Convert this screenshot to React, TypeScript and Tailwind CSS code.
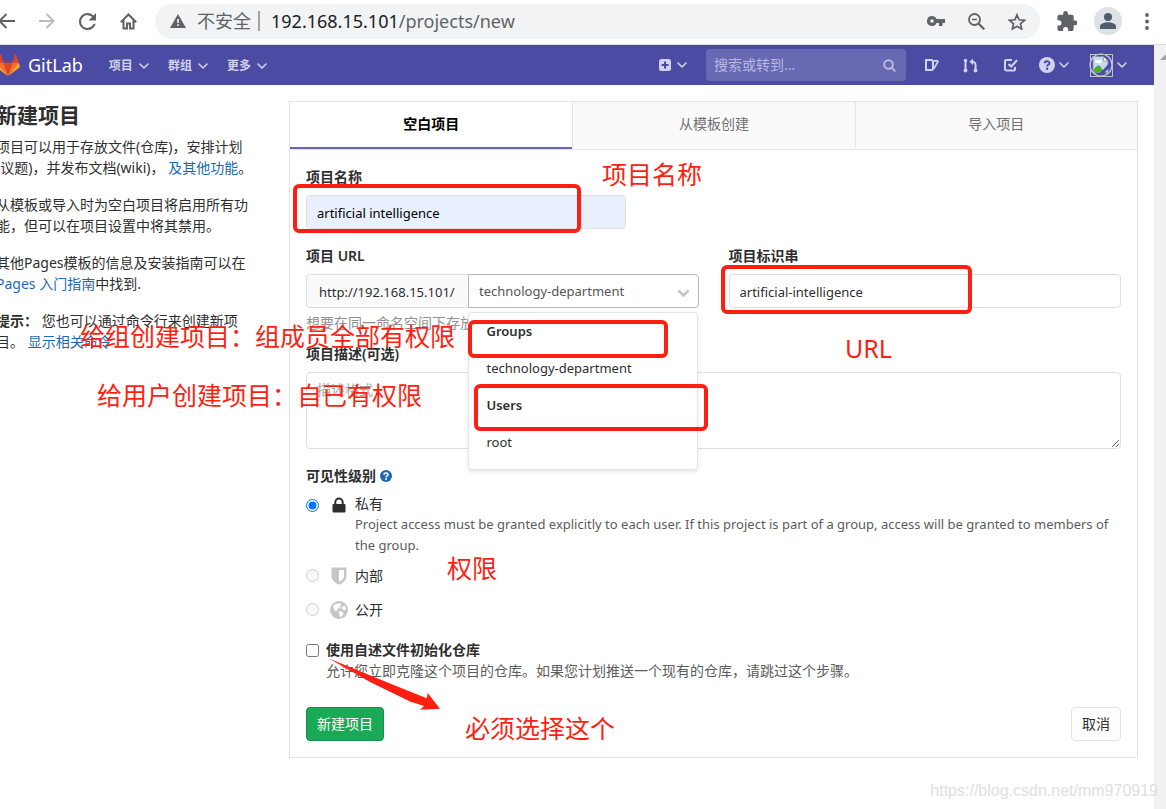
import { useState } from "react";

const FONT = 'font-["Noto_Sans","Noto_Sans_CJK_SC",sans-serif]';

const NAV_LIST = ["项目", "群组", "更多"];
const TAB_LIST = ["空白项目", "从模板创建", "导入项目"];

const NAMESPACE_LIST = [
  { group: "Groups", items: ["technology-department"] },
  { group: "Users", items: ["root"] },
];

const NOTE_LIST = [
  { text: "项目名称", className: "left-[602px] top-[156px]" },
  { text: "URL", className: "left-[845px] top-[330px]" },
  { text: "给组创建项目：组成员全部有权限", className: "left-[80px] top-[318px]" },
  { text: "给用户创建项目：自已有权限", className: "left-[97px] top-[377px]" },
  { text: "权限", className: "left-[447px] top-[550px]" },
  { text: "必须选择这个", className: "left-[465px] top-[710px]" },
];

const BOX_LIST = [
  "left-[293px] top-[184px] w-[288px] h-[49px]",
  "left-[468px] top-[320px] w-[200px] h-[38px]",
  "left-[474px] top-[384px] w-[234px] h-[47px]",
  "left-[721px] top-[265px] w-[251px] h-[49px]",
];

const Chevron = () => (
  <svg width="10" height="6" viewBox="0 0 10 6" fill="none" stroke="currentColor" strokeWidth="1.6" aria-hidden="true">
    <path d="M1 1l4 4 4-4" strokeLinecap="round" strokeLinejoin="round" />
  </svg>
);

const BrowserBar = () => {
  return (
    <div className="flex h-[45px] items-center border-b border-[#d9dbde] bg-white pb-0.5 text-[#5f6368]">
      <div className="flex items-center gap-6 pr-[18px]">
        <button type="button" aria-label="back" className="-ml-0.5">
          <svg width="17" height="16" viewBox="0 0 17 16" fill="none" stroke="#5f6368" strokeWidth="2">
            <path d="M17 8H2M8.500 1L1.500 8l7 7" />
          </svg>
        </button>
        <button type="button" aria-label="forward">
          <svg width="16" height="16" viewBox="0 0 16 16" fill="none" stroke="#babcbe" strokeWidth="2">
            <path d="M0 8h15M7.500 1l7 7-7 7" />
          </svg>
        </button>
        <button type="button" aria-label="reload">
          <svg width="17" height="17" viewBox="4 4 16 16" fill="#5f6368">
            <path d="M17.650 6.350A7.960 7.960 0 0 0 12 4a8 8 0 1 0 7.730 10h-2.080A6 6 0 1 1 12 6c1.660 0 3.140.69 4.220 1.780L13 11h7V4z" />
          </svg>
        </button>
        <button type="button" aria-label="home">
          <svg width="17" height="17" viewBox="0 0 17 17" fill="none" stroke="#5f6368" strokeWidth="2">
            <path d="M.8 9.200L8.500 1.500l7.700 7.700M3.500 7.500v8h3.500v-5h3v5h3.500v-8" />
          </svg>
        </button>
      </div>
      <div className="flex h-[35px] flex-1 items-center rounded-full bg-[#f1f3f4] pl-[15px] pr-3.5">
        <svg width="16" height="14" viewBox="0 0 16 14" aria-hidden="true">
          <path d="M8 0l8 14H0z" fill="#5f6368" />
          <path d="M7.200 5h1.700v4H7.200zM7.200 10.300h1.700V12H7.200z" fill="#f1f3f4" />
        </svg>
        <span className="ml-[11px] text-lg leading-6">不安全</span>
        <span className="ml-[7px] h-5 w-0.5 bg-[#a0a3a7]" />
        <span className="ml-[11px] text-lg leading-6 text-[#202124]">
          192.168.15.101<span className="text-[#5f6368]">/projects/new</span>
        </span>
        <div className="ml-auto flex items-center gap-[23px]">
          <svg width="18" height="10" viewBox="0 0 18 10" aria-hidden="true">
            <path
              d="M5 0a5 5 0 1 0 4.600 7H12v3h3.500V7H18V3H9.600A5 5 0 0 0 5 0zm0 3.200a1.800 1.800 0 1 1 0 3.600 1.800 1.800 0 0 1 0-3.600z"
              fill="#5f6368"
            />
          </svg>
          <svg width="17" height="17" viewBox="0 0 17 17" fill="none" stroke="#5f6368" strokeWidth="1.800" aria-hidden="true">
            <circle cx="6.500" cy="6.500" r="5.500" />
            <path d="M10.700 10.700l5.600 5.600" strokeWidth="2.200" />
            <path d="M4 6.500h5" strokeWidth="1.500" />
          </svg>
          <svg width="18" height="17" viewBox="0 0 18 17" fill="none" stroke="#5f6368" strokeWidth="1.700" aria-hidden="true">
            <path d="M9 1.800l2.100 5 5.400.5-4.100 3.500 1.300 5.200L9 13.200 4.300 16l1.300-5.200-4.100-3.500 5.400-.5z" />
          </svg>
        </div>
      </div>
      <div className="flex items-center pl-[17px] pr-[17px]">
        <svg width="20" height="20" viewBox="2 1 20 21" fill="#5f6368" aria-hidden="true">
          <path d="M20.500 11H19V7a2 2 0 0 0-2-2h-4V3.500a2.500 2.500 0 0 0-5 0V5H4a2 2 0 0 0-2 2v3.800h1.500a2.700 2.700 0 0 1 0 5.400H2V20c0 1.100.9 2 2 2h3.800v-1.500a2.700 2.700 0 0 1 5.400 0V22H17a2 2 0 0 0 2-2v-4h1.500a2.500 2.500 0 0 0 0-5z" />
        </svg>
        <svg className="ml-[17px]" width="28" height="28" viewBox="0 0 28 28" aria-hidden="true">
          <circle cx="14" cy="14" r="14" fill="#dee1e6" />
          <circle cx="14" cy="10" r="4" fill="#4f5b6e" />
          <path d="M6 22v-2.500c0-3 5-4.300 8-4.300s8 1.300 8 4.300V22z" fill="#4f5b6e" />
        </svg>
        <svg className="ml-[23px]" width="4" height="17" viewBox="0 0 4 17" fill="#5f6368" aria-hidden="true">
          <circle cx="2" cy="2" r="1.900" />
          <circle cx="2" cy="8.500" r="1.900" />
          <circle cx="2" cy="15" r="1.900" />
        </svg>
      </div>
    </div>
  );
};

const Navbar = () => {
  return (
    <nav className="flex h-10 items-center bg-[#4b4ba3] text-[#d1d1f0]">
      <a href="#" className="flex items-center text-white">
        <svg className="-ml-1" width="24" height="22" viewBox="0 0 24 22" aria-hidden="true">
          <path d="M12 22l4.400-13.600H7.600z" fill="#e24329" />
          <path d="M12 22L7.600 8.400H1.400z" fill="#fc6d26" />
          <path d="M1.400 8.400L.1 12.500a.9.9 0 0 0 .3 1L12 22z" fill="#fca326" />
          <path d="M1.400 8.400h6.200L5 .3a.5.5 0 0 0-.9 0z" fill="#e24329" />
          <path d="M12 22l4.400-13.600h6.200z" fill="#fc6d26" />
          <path d="M22.600 8.400l1.300 4.100a.9.900 0 0 1-.3 1L12 22z" fill="#fca326" />
          <path d="M22.600 8.400h-6.200L19 .3a.5.500 0 0 1 .9 0z" fill="#e24329" />
        </svg>
        <span className="ml-2 text-lg leading-6">GitLab</span>
      </a>
      <ul className="ml-[26px] flex items-center gap-[19px]">
        {NAV_LIST.map((nav) => (
          <li key={nav}>
            <button type="button" className="flex items-center gap-1.5 pt-px text-xs font-bold leading-5">
              {nav}
              <Chevron />
            </button>
          </li>
        ))}
      </ul>

      <div className="ml-auto flex items-center">
        <button type="button" aria-label="新建" className="flex items-center gap-1.5">
          <svg width="12" height="12" viewBox="0 0 12 12" aria-hidden="true">
            <rect width="12" height="12" rx="2.500" fill="#d1d1f0" />
            <path d="M6 2.500v7M2.500 6h7" stroke="#4b4ba3" strokeWidth="2" />
          </svg>
          <Chevron />
        </button>
        <label className="ml-[19px] flex h-8 w-[200px] items-center rounded bg-[#6868b3] px-2">
          <input
            type="text"
            aria-label="搜索"
            placeholder="搜索或转到..."
            className="w-full min-w-0 bg-transparent text-sm outline-none placeholder:text-[#b9b9e2]"
          />
          <svg className="mr-0.5 shrink-0" width="13" height="13" viewBox="0 0 13 13" fill="none" stroke="#b9b9e2" strokeWidth="2" aria-hidden="true">
            <circle cx="5.500" cy="5.500" r="4.300" />
            <path d="M8.700 8.700l3 3" strokeLinecap="round" />
          </svg>
        </label>
        <a href="#" aria-label="议题" className="ml-[19px]">
          <svg width="14" height="14" viewBox="0 0 14 14" fill="none" stroke="currentColor" strokeWidth="2">
            <path d="M1 2h5.500A1.500 1.500 0 0 1 8 3.500v7A1.500 1.500 0 0 1 6.500 12H1z" />
            <path d="M9 2.800h3.200c.6 0 .8.500.6 1L9 10.500" strokeWidth="1.700" />
          </svg>
        </a>
        <a href="#" aria-label="合并请求" className="ml-6">
          <svg width="15" height="15" viewBox="0 0 15 15" fill="none" stroke="currentColor" strokeWidth="2">
            <path d="M2.500 3v9M12.500 12V7c0-2-1-3.200-3.500-3.200" />
            <circle cx="2.500" cy="2.500" r="1.800" fill="currentColor" stroke="none" />
            <circle cx="2.500" cy="12.500" r="1.900" fill="currentColor" stroke="none" />
            <circle cx="12.500" cy="12.500" r="1.900" fill="currentColor" stroke="none" />
            <path d="M10 .5v6.500L6.300 3.800z" fill="currentColor" stroke="none" />
          </svg>
        </a>
        <a href="#" aria-label="待办事项" className="ml-[26px]">
          <svg width="14" height="14" viewBox="0 0 14 14" fill="none" stroke="currentColor" strokeWidth="2">
            <path d="M8 2H2.200A1.200 1.200 0 0 0 1 3.200v8.100a1.200 1.200 0 0 0 1.200 1.200h7.600a1.200 1.200 0 0 0 1.200-1.200V9" />
            <path d="M4.500 6l2.700 2.500L13 2.200" />
          </svg>
        </a>
        <button type="button" aria-label="帮助" className="ml-[21px] flex items-center gap-1">
          <svg width="16" height="16" viewBox="0 0 16 16" aria-hidden="true">
            <circle cx="8" cy="8" r="8" fill="#d1d1f0" />
            <path d="M5.700 6.300C5.700 3.500 10.400 3.500 10.400 6.200 10.400 7.800 8.100 7.900 8.100 9.500" fill="none" stroke="#4b4ba3" strokeWidth="1.900" />
            <circle cx="8.100" cy="11.800" r="1.200" fill="#4b4ba3" />
          </svg>
          <Chevron />
        </button>
        <button type="button" aria-label="用户" className="ml-5 mr-[27px] flex items-center gap-1">
          <svg width="24" height="24" viewBox="0 0 24 24" aria-hidden="true">
            <path d="M4 3.500h10.500l4.500 4.500v11.500H4z" fill="#c3d9f8" stroke="#8f8f9c" />
            <path d="M14.500 3.500V8H19z" fill="#fff" stroke="#8f8f9c" strokeWidth=".8" />
            <ellipse cx="9.500" cy="8.500" rx="3.500" ry="1.800" fill="#fff" />
            <path d="M4.500 19v-2c3-5 6-6 8-2l3 5z" fill="#4caf2a" />
            <path d="M11 20L20 10.500V15l-5 5z" fill="#4b4ba3" />
            <circle cx="12" cy="12" r="11" fill="none" stroke="#c9c9ee" strokeWidth="1.200" />
            <rect x="1.500" y="1.500" width="22" height="22" fill="none" stroke="#c0c0c0" />
          </svg>
          <Chevron />
        </button>
      </div>
    </nav>
  );
};

const Sidebar = () => {
  return (
    <aside className="-ml-1 w-[293px] shrink-0 whitespace-nowrap pt-4">
      <h4 className="mb-1.5 text-[21px] font-bold leading-[29px]">新建项目</h4>
      <p className="mb-4">
        项目可以用于存放文件(仓库)，安排计划
        <br />
        (议题)，并发布文档(wiki)，{" "}
        <a href="#" className="text-[#1b69b6]">
          及其他功能
        </a>
        。
      </p>
      <p className="mb-4">
        从模板或导入时为空白项目将启用所有功
        <br />
        能，但可以在项目设置中将其禁用。
      </p>
      <p className="mb-4">
        其他Pages模板的信息及安装指南可以在
        <br />
        <a href="#" className="text-[#1b69b6]">
          Pages 入门指南
        </a>
        中找到.
      </p>
      <p>
        <strong>提示：</strong> 您也可以通过命令行来创建新项
        <br />
        目。{" "}
        <a href="#" className="text-[#1b69b6]">
          显示相关命令
        </a>
      </p>
    </aside>
  );
};

const NamespaceMenu = () => {
  return (
    <div className="absolute right-px top-[38px] z-10 h-[158px] w-[230px] rounded-sm border border-[#e5e5e5] bg-white pl-[18px] pt-2 text-[13px] shadow-[0_2px_4px_rgba(0,0,0,0.1)]">
      {NAMESPACE_LIST.map(({ group, items }) => (
        <div key={group}>
          <div className="mb-4 font-semibold">{group}</div>
          {items.map((item) => (
            <div key={item} className="mb-4">
              {item}
            </div>
          ))}
        </div>
      ))}
    </div>
  );
};

const ProjectForm = () => {
  const [name, setName] = useState<string>("artificial intelligence");
  const [slug, setSlug] = useState<string>("artificial-intelligence");
  const [namespace, setNamespace] = useState<string>("technology-department");
  const [visibility, setVisibility] = useState<string>("private");

  return (
    <form className="p-4" onSubmit={(e) => e.preventDefault()}>
      <label htmlFor="name" className="mb-2 block font-semibold">
        项目名称
      </label>
      <input
        type="text"
        id="name"
        value={name}
        onChange={(e) => setName(e.target.value)}
        className="block h-[34px] w-80 rounded border border-[#dfdfdf] bg-[#e8f0fe] px-2.5 pt-0.5 text-[13px] text-black outline-none"
      />

      <div className="mt-4 grid grid-cols-2 gap-[30px]">
        <div>
          <label htmlFor="namespace" className="mb-2 block font-semibold">
            项目 URL
          </label>
          <div className="relative flex h-[34px]">
            <div className="flex w-[162px] shrink-0 items-center rounded-l border border-r-0 border-[#dfdfdf] bg-[#fafafa] pl-3 pt-0.5 text-[13px]">
              http://192.168.15.101/
            </div>
            <select
              id="namespace"
              value={namespace}
              onChange={(e) => setNamespace(e.target.value)}
              className="min-w-0 flex-1 appearance-none rounded-r-sm border border-[#b8b8b8] bg-white px-2.5 text-[13px] text-[#555] outline-none"
            >
              <option>technology-department</option>
              <option>root</option>
            </select>
            <svg className="absolute right-[9px] top-[15px]" width="13" height="9" viewBox="0 0 13 9" fill="none" stroke="#c4c4c4" strokeWidth="2.600" aria-hidden="true">
              <path d="M1.500 1.500l5 5 5-5" />
            </svg>
            <NamespaceMenu />
          </div>
          <p className="mt-1 text-[#919191]">想要在同一命名空间下存放</p>
        </div>
        <div>
          <label htmlFor="slug" className="mb-2 block font-semibold">
            项目标识串
          </label>
          <input
            type="text"
            id="slug"
            value={slug}
            onChange={(e) => setSlug(e.target.value)}
            className="block h-[34px] w-full rounded border border-[#dfdfdf] bg-white px-2.5 pt-0.5 text-[13px] outline-none"
          />
        </div>
      </div>

      <label htmlFor="description" className="mb-2 mt-2.5 block font-semibold">
        项目描述(可选)
      </label>
      <textarea
        id="description"
        placeholder="描述格式"
        className="block h-[77px] w-full rounded border border-[#dfdfdf] bg-white px-2.5 py-1.5 outline-none placeholder:text-[#a8a8a8]"
      />

      <fieldset className="mt-4">
        <legend className="mb-2 flex items-center gap-1 font-semibold">
          可见性级别
          <svg width="12" height="12" viewBox="0 0 16 16" aria-hidden="true">
            <circle cx="8" cy="8" r="8" fill="#1b69b6" />
            <path d="M5.400 6.200C5.400 3.300 10.600 3.300 10.600 6.200 10.600 7.800 8.100 7.900 8.100 9.700" fill="none" stroke="#fff" strokeWidth="2.200" />
            <circle cx="8.100" cy="12" r="1.300" fill="#fff" />
          </svg>
        </legend>
        <div className="flex items-start">
          <input
            type="radio"
            name="visibility"
            id="private"
            checked={visibility === "private"}
            onChange={() => setVisibility("private")}
            className="mt-[5px] size-[13px] shrink-0"
          />
          <svg className="ml-[13px] mt-[3px] shrink-0" width="14" height="16" viewBox="0 0 14 16" aria-hidden="true">
            <rect x=".5" y="7" width="13" height="8.500" rx="1" fill="#2e2e2e" />
            <path d="M3.300 8V5.200a3.700 3.700 0 0 1 7.400 0V8" fill="none" stroke="#2e2e2e" strokeWidth="2" />
          </svg>
          <div className="ml-[9px]">
            <label htmlFor="private" className="block leading-5">
              私有
            </label>
            <p className="text-[13px] text-[#5c5c5c]">
              Project access must be granted explicitly to each user. If this project is part of a group, access will be
              granted to members of the group.
            </p>
          </div>
        </div>
        <div className="mt-[9px] flex items-center">
          <input type="radio" name="visibility" id="internal" disabled className="size-[13px] shrink-0" />
          <svg className="ml-3 shrink-0" width="16" height="18" viewBox="0 0 16 18" aria-hidden="true">
            <path d="M.5.500h15V9c0 4-3.500 7-7.500 8.700C4 16 .5 13 .5 9z" fill="#c6c6c6" />
            <path d="M8 3h5v6c0 2.500-2 4.500-5 6z" fill="#fff" />
          </svg>
          <label htmlFor="internal" className="ml-2">
            内部
          </label>
        </div>
        <div className="mt-[13px] flex items-center">
          <input type="radio" name="visibility" id="public" disabled className="size-[13px] shrink-0" />
          <svg className="ml-[11px] shrink-0" width="18" height="18" viewBox="0 0 18 18" aria-hidden="true">
            <circle cx="9" cy="9" r="9" fill="#c6c6c6" />
            <path
              d="M3 5.500L5 3.300 9.500 2l2 1.200-1.800 2 .8 1.500-2.700 1L6.300 10.500 4.500 9.200zM12.500 5.500l2.500-.8 1.200 3-1.200 1.500-2.300-.8-1.200-1.700zM8.500 10.500l2.700-.3 2.300 2-1 2.300-2.300 2-.7-3z"
              fill="#fff"
            />
          </svg>
          <label htmlFor="public" className="ml-[7px]">
            公开
          </label>
        </div>
      </fieldset>

      <div className="mt-[19px] flex items-start">
        <input type="checkbox" id="readme" className="mt-[5px] size-[13px] shrink-0" />
        <div className="ml-[7px]">
          <label htmlFor="readme" className="block font-bold">
            使用自述文件初始化仓库
          </label>
          <p className="text-[#5c5c5c]">允许您立即克隆这个项目的仓库。如果您计划推送一个现有的仓库，请跳过这个步骤。</p>
        </div>
      </div>

      <div className="mt-[26px] flex justify-between">
        <button type="submit" className="h-[34px] rounded border border-[#168f48] bg-[#1aaa55] px-2.5 pb-0.5 text-white">
          新建项目
        </button>
        <button type="button" className="h-[34px] rounded border border-[#e3e3e3] bg-white px-2.5 pb-0.5">
          取消
        </button>
      </div>
    </form>
  );
};

// 标注
const Notes = () => {
  return (
    <div className="pointer-events-none absolute inset-0 z-20 overflow-hidden">
      {BOX_LIST.map((box) => (
        <div key={box} className={`absolute rounded-md border-4 border-[#ff1f12] ${box}`} />
      ))}
      {NOTE_LIST.map(({ text, className }) => (
        <p key={text} className={`absolute whitespace-nowrap text-[25px] leading-9 text-[#ff1f12] ${className}`}>
          {text}
        </p>
      ))}
      <svg className="absolute left-[328px] top-[658px]" width="112" height="53" viewBox="0 0 112 53" aria-hidden="true">
        <path d="M1 .5L62 25.500 98.700 40.300 99.700 35 112 50.700 92 51.800 96 48 82 43.500 42 24z" fill="#ff1f12" />
      </svg>
      <p className='absolute bottom-1.5 right-2 font-["Liberation_Sans",sans-serif] text-base leading-6 text-[#e0e0e0]'>
        https://blog.csdn.net/mm970919
      </p>
    </div>
  );
};

const App = () => {
  const [tab, setTab] = useState<string>(TAB_LIST[0]);

  return (
    <div className={`relative flex min-h-screen flex-col overflow-hidden bg-white text-sm leading-[21px] text-[#2e2e2e] ${FONT}`}>
      <BrowserBar />
      <div className="flex flex-1">
        <div className="min-w-0 flex-1">
          <Navbar />
          <main className="flex pr-4">
            <Sidebar />
            <section className="mt-4 min-w-0 flex-1 border border-[#e3e3e3]">
              <div role="tablist" className="grid grid-cols-3 border-b border-[#e3e3e3]">
                {TAB_LIST.map((item) => (
                  <button
                    key={item}
                    type="button"
                    role="tab"
                    aria-selected={tab === item}
                    onClick={() => setTab(item)}
                    className={`h-[47px] border-b-2 pb-0.5 ${
                      tab === item
                        ? "border-[#6666c4] bg-white font-semibold text-black"
                        : "border-b-[#fafafa] border-l border-l-[#e3e3e3] bg-[#fafafa] text-[#707070]"
                    }`}
                  >
                    {item}
                  </button>
                ))}
              </div>
              <ProjectForm />
            </section>
          </main>
        </div>
        <div className="w-3 shrink-0 bg-[#f1f1f1] pt-2.5">
          <svg className="ml-1.5" width="6" height="5" viewBox="0 0 6 5" aria-hidden="true">
            <path d="M0 5l5-5h1v5z" fill="#a3a3a3" />
          </svg>
        </div>
      </div>
      <Notes />
    </div>
  );
};
export default App;
